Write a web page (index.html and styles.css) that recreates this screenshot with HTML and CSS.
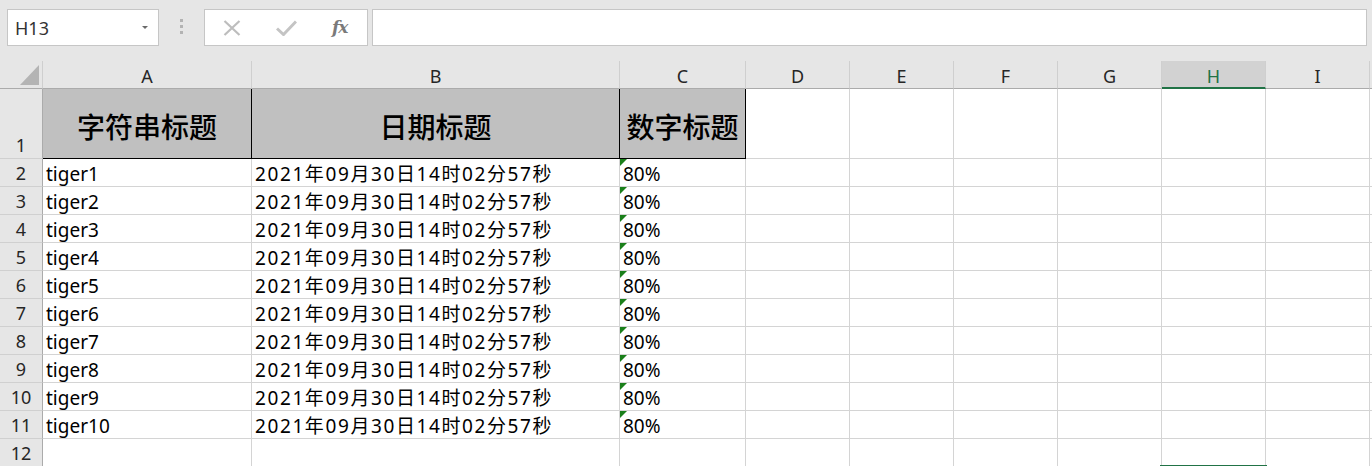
FILE: index.html
```html
<!DOCTYPE html>
<html lang="zh">
<head>
<meta charset="utf-8">
<title>Sheet</title>
<link rel="stylesheet" href="styles.css">
</head>
<body>
<div class="toolbar">
  <div class="namebox"><span class="nb-text">H13</span><span class="nb-arrow"></span></div>
  <div class="grip"><i></i><i></i><i></i></div>
  <div class="fbtns">
    <svg class="ic-x" width="18" height="16" viewBox="0 0 18 16"><path d="M1.5 1 L16.5 15 M16.5 1 L1.5 15" stroke="#bdbdbd" stroke-width="2.2" fill="none"/></svg>
    <svg class="ic-ok" width="21" height="16" viewBox="0 0 21 16"><path d="M1 8.5 L7.5 14.5 L20 1.5" stroke="#c4c4c4" stroke-width="3" fill="none"/></svg>
    <span class="fx">fx</span>
  </div>
  <div class="finput"></div>
</div>
<div class="sheet">
  <div class="corner"><span class="tri"></span></div>
  <div class="ch">A</div><div class="ch">B</div><div class="ch">C</div><div class="ch">D</div><div class="ch">E</div><div class="ch">F</div><div class="ch">G</div><div class="ch sel">H</div><div class="ch">I</div><div class="ch"></div>

  <div class="rh">1</div><div class="hd">字符串标题</div><div class="hd">日期标题</div><div class="hd">数字标题</div><div class="c"></div><div class="c"></div><div class="c"></div><div class="c"></div><div class="c"></div><div class="c"></div><div class="c"></div>

  <div class="rh">2</div><div class="c">tiger1</div><div class="c dt">2021年09月30日14时02分57秒</div><div class="c pct">80%</div><div class="c"></div><div class="c"></div><div class="c"></div><div class="c"></div><div class="c"></div><div class="c"></div><div class="c"></div>
  <div class="rh">3</div><div class="c">tiger2</div><div class="c dt">2021年09月30日14时02分57秒</div><div class="c pct">80%</div><div class="c"></div><div class="c"></div><div class="c"></div><div class="c"></div><div class="c"></div><div class="c"></div><div class="c"></div>
  <div class="rh">4</div><div class="c">tiger3</div><div class="c dt">2021年09月30日14时02分57秒</div><div class="c pct">80%</div><div class="c"></div><div class="c"></div><div class="c"></div><div class="c"></div><div class="c"></div><div class="c"></div><div class="c"></div>
  <div class="rh">5</div><div class="c">tiger4</div><div class="c dt">2021年09月30日14时02分57秒</div><div class="c pct">80%</div><div class="c"></div><div class="c"></div><div class="c"></div><div class="c"></div><div class="c"></div><div class="c"></div><div class="c"></div>
  <div class="rh">6</div><div class="c">tiger5</div><div class="c dt">2021年09月30日14时02分57秒</div><div class="c pct">80%</div><div class="c"></div><div class="c"></div><div class="c"></div><div class="c"></div><div class="c"></div><div class="c"></div><div class="c"></div>
  <div class="rh">7</div><div class="c">tiger6</div><div class="c dt">2021年09月30日14时02分57秒</div><div class="c pct">80%</div><div class="c"></div><div class="c"></div><div class="c"></div><div class="c"></div><div class="c"></div><div class="c"></div><div class="c"></div>
  <div class="rh">8</div><div class="c">tiger7</div><div class="c dt">2021年09月30日14时02分57秒</div><div class="c pct">80%</div><div class="c"></div><div class="c"></div><div class="c"></div><div class="c"></div><div class="c"></div><div class="c"></div><div class="c"></div>
  <div class="rh">9</div><div class="c">tiger8</div><div class="c dt">2021年09月30日14时02分57秒</div><div class="c pct">80%</div><div class="c"></div><div class="c"></div><div class="c"></div><div class="c"></div><div class="c"></div><div class="c"></div><div class="c"></div>
  <div class="rh">10</div><div class="c">tiger9</div><div class="c dt">2021年09月30日14时02分57秒</div><div class="c pct">80%</div><div class="c"></div><div class="c"></div><div class="c"></div><div class="c"></div><div class="c"></div><div class="c"></div><div class="c"></div>
  <div class="rh">11</div><div class="c">tiger10</div><div class="c dt">2021年09月30日14时02分57秒</div><div class="c pct">80%</div><div class="c"></div><div class="c"></div><div class="c"></div><div class="c"></div><div class="c"></div><div class="c"></div><div class="c"></div>
  <div class="rh">12</div><div class="c"></div><div class="c"></div><div class="c"></div><div class="c"></div><div class="c"></div><div class="c"></div><div class="c"></div><div class="c"></div><div class="c"></div><div class="c"></div>

  <div class="selbox"></div>
</div>
</body>
</html>
```
FILE: styles.css
```css
html, body {
  margin: 0;
  padding: 0;
}
body {
  width: 1372px;
  height: 466px;
  overflow: hidden;
  background: #ffffff;
  font-family: "Noto Sans", "Noto Sans CJK SC", sans-serif;
  color: #000;
}

/* ---------- toolbar ---------- */
.toolbar {
  height: 61px;
  box-sizing: border-box;
  background: #e6e6e6;
  padding: 9px 5px 0 7px;
  display: flex;
  align-items: flex-start;
}
.namebox {
  width: 152px;
  height: 37px;
  box-sizing: border-box;
  border: 1px solid #c6c6c6;
  background: #fff;
  display: flex;
  align-items: center;
  padding-left: 7px;
}
.nb-text {
  font-size: 18px;
  color: #333;
  flex: 1;
}
.nb-arrow {
  width: 0;
  height: 0;
  border-left: 3px solid transparent;
  border-right: 3px solid transparent;
  border-top: 3px solid #6a6a6a;
  margin-right: 10px;
}
.grip {
  width: 3px;
  margin: 10px 0 0 21px;
  display: flex;
  flex-direction: column;
  gap: 3px;
}
.grip i {
  display: block;
  width: 3px;
  height: 3px;
  background: #b3b3b3;
}
.fbtns {
  margin-left: 21px;
  width: 164px;
  height: 37px;
  box-sizing: border-box;
  border: 1px solid #c6c6c6;
  background: #fff;
  display: flex;
  align-items: center;
}
.ic-x { margin-left: 18px; }
.ic-ok { margin-left: 35px; }
.fx {
  margin-left: 35px;
  font-family: "DejaVu Serif", "Liberation Serif", serif;
  font-style: italic;
  font-weight: bold;
  font-size: 17px;
  color: #7a7a7a;
  letter-spacing: -1px;
  margin-top: -2px;
}
.finput {
  flex: 1;
  margin-left: 4px;
  height: 37px;
  box-sizing: border-box;
  border: 1px solid #c6c6c6;
  background: #fff;
}

/* ---------- sheet ---------- */
.sheet {
  position: relative;
  display: grid;
  grid-template-columns: 43px 209px 368px 126px repeat(7, 104px);
  grid-template-rows: 28px 70px repeat(11, 28px);
  width: 1474px;
}
.sheet > div {
  box-sizing: border-box;
}
.corner {
  background: #e6e6e6;
  border-right: 1px solid #cfcfcf;
  border-bottom: 1px solid #ababab;
  position: relative;
}
.tri {
  position: absolute;
  left: 20px;
  top: 4px;
  width: 0;
  height: 0;
  border-left: 19px solid transparent;
  border-bottom: 20px solid #b4b4b4;
}
.ch {
  background: #e6e6e6;
  border-right: 1px solid #cfcfcf;
  border-bottom: 1px solid #ababab;
  display: flex;
  justify-content: center;
  align-items: center;
  padding-top: 2px;
  font-size: 18px;
  color: #262626;
}
.ch.sel {
  background: #d2d2d2;
  color: #217346;
  border-bottom: 2px solid #217346;
  padding-top: 3px;
}
.rh {
  background: #e6e6e6;
  border-right: 1px solid #ababab;
  border-bottom: 1px solid #d0d0d0;
  display: flex;
  justify-content: center;
  align-items: flex-end;
  padding-bottom: 3px;
  font-size: 18px;
  line-height: 20px;
  color: #262626;
}
.c {
  border-right: 1px solid #d4d4d4;
  border-bottom: 1px solid #d4d4d4;
  padding: 5px 0 0 3px;
  font-size: 19px;
  line-height: 20px;
  white-space: nowrap;
  overflow: hidden;
  color: #000;
}
.c.dt {
  letter-spacing: 1.6px;
}
.c.pct {
  position: relative;
}
.c.pct::before {
  content: "";
  position: absolute;
  left: 0;
  top: 0;
  width: 0;
  height: 0;
  border-top: 7px solid #1a7f1a;
  border-right: 7px solid transparent;
}
.hd {
  background: #c0c0c0;
  border-right: 1px solid #000;
  border-bottom: 1px solid #000;
  display: flex;
  justify-content: center;
  align-items: center;
  padding-top: 4px;
  font-family: "Noto Sans CJK SC", sans-serif;
  font-weight: 500;
  font-size: 28px;
  color: #000;
}
.selbox {
  position: absolute;
  left: 1160px;
  top: 404px;
  width: 107px;
  height: 2px;
  background: #217346;
}
```
